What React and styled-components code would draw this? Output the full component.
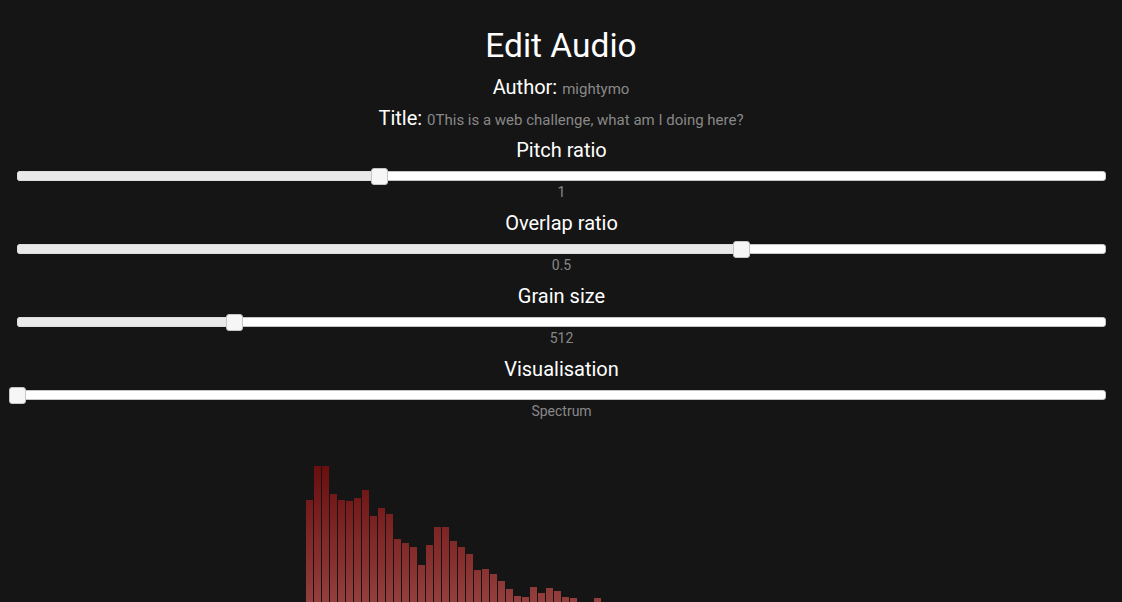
import React from "react";
import styled, { createGlobalStyle } from "styled-components";

const GlobalStyle = createGlobalStyle`
  html, body {
    margin: 0;
    padding: 0;
    background: #151515;
    overflow: hidden;
  }
  body {
    font-family: Roboto, "Liberation Sans", sans-serif;
    color: #fff;
  }
`;

const Page = styled.div`
  display: flex;
  flex-direction: column;
  align-items: center;
  padding-top: 27px;
`;

const Heading = styled.h1`
  margin: 0;
  font-size: 33.5px;
  line-height: 38px;
  font-weight: 400;
`;

const MetaLine = styled.div`
  margin-top: ${(p) => p.$gap}px;
  font-size: 20px;
  line-height: 24px;
`;

const MetaValue = styled.span`
  font-size: 15px;
  color: #888;
`;

const Controls = styled.div`
  align-self: stretch;
  display: flex;
  flex-direction: column;
  padding: 6px 16px 0 17px;
  gap: 11px;
`;

const Control = styled.div`
  display: flex;
  flex-direction: column;
  align-items: center;
`;

const Label = styled.div`
  font-size: 20px;
  line-height: 24px;
`;

const Track = styled.div`
  position: relative;
  align-self: stretch;
  margin-top: 9px;
  height: 10px;
  box-sizing: border-box;
  background: #fff;
  border: 1px solid #c5c5c5;
  border-radius: 3px;
`;

const Range = styled.div`
  position: absolute;
  left: -1px;
  top: -1px;
  bottom: -1px;
  background: #e9e9e9;
  border: 1px solid #dddddd;
  border-radius: 3px 0 0 3px;
`;

const Thumb = styled.div`
  position: absolute;
  top: -4px;
  width: 17px;
  height: 17px;
  margin-left: -9px;
  box-sizing: border-box;
  background: #f6f6f6;
  border: 1px solid #c5c5c5;
  border-radius: 3px;
`;

const Value = styled.div`
  margin-top: 3px;
  font-size: 14px;
  line-height: 16px;
  color: #888;
`;

const Spectrum = styled.svg`
  display: block;
  margin-top: 11px;
`;

const sliders = [
  { label: "Pitch ratio", pos: 0.333, value: "1" },
  { label: "Overlap ratio", pos: 0.666, value: "0.5" },
  { label: "Grain size", pos: 0.2, value: "512" },
  { label: "Visualisation", pos: 0, value: "Spectrum" },
];

const SVG_TOP = 430;
const SVG_H = 180;
const barTops = [
  500, 466, 466, 494, 500, 501, 498, 490, 516, 508, 514, 539, 543, 547, 565,
  545, 527, 527, 541, 547, 554, 570, 569, 574, 581, 589, 596, 597, 587, 593,
  588, 591, 597, 598, 604, 604, 598,
];

function Slider({ label, pos, value }) {
  return (
    <Control>
      <Label>{label}</Label>
      <Track>
        {pos > 0 && <Range style={{ width: `calc(${pos * 100}% + 1px)` }} />}
        <Thumb style={{ left: `${pos * 100}%` }} />
      </Track>
      <Value>{value}</Value>
    </Control>
  );
}

export default function App() {
  return (
    <>
      <GlobalStyle />
      <Page>
        <Heading>Edit Audio</Heading>
        <MetaLine $gap={10}>
          Author: <MetaValue>mightymo</MetaValue>
        </MetaLine>
        <MetaLine $gap={5}>
          Title: <MetaValue>0This is a web challenge, what am I doing here?</MetaValue>
        </MetaLine>
        <Controls>
          {sliders.map((s) => (
            <Slider key={s.label} {...s} />
          ))}
        </Controls>
        <Spectrum width="512" height={SVG_H} viewBox={`0 0 512 ${SVG_H}`}>
          <defs>
            <linearGradient
              id="bars"
              gradientUnits="userSpaceOnUse"
              x1="0"
              y1={466 - SVG_TOP}
              x2="0"
              y2={602 - SVG_TOP}
            >
              <stop offset="0" stopColor="#6a0e0e" />
              <stop offset="1" stopColor="#943e3e" />
            </linearGradient>
          </defs>
          {barTops.map((t, i) => (
            <rect
              key={i}
              x={1 + i * 8}
              y={t - SVG_TOP}
              width="7"
              height={SVG_H - (t - SVG_TOP)}
              fill="url(#bars)"
            />
          ))}
        </Spectrum>
      </Page>
    </>
  );
}
